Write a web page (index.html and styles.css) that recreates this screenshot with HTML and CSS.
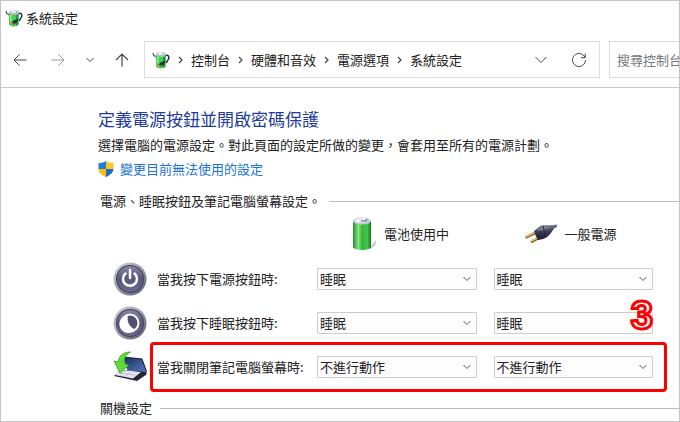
FILE: index.html
```html
<!DOCTYPE html>
<html lang="zh-Hant">
<head>
    <meta charset="UTF-8">
    <meta name="viewport" content="width=device-width, initial-scale=1.0">
    <title>系統設定</title>
    <link rel="stylesheet" href="styles.css">
</head>
<body>
    <!-- Shared icons -->
    <svg class="icon-defs" aria-hidden="true">
        <defs>
            <linearGradient id="greenMetal" x1="0" x2="1" y1="0" y2="0">
                <stop offset="0" stop-color="#1f8f2b"/>
                <stop offset="0.3" stop-color="#86e684"/>
                <stop offset="0.5" stop-color="#35b53c"/>
                <stop offset="0.8" stop-color="#45c44a"/>
                <stop offset="1" stop-color="#14701d"/>
            </linearGradient>
            <linearGradient id="ring" x1="0" x2="1" y1="0" y2="1">
                <stop offset="0" stop-color="#d4d5dc"/>
                <stop offset="0.5" stop-color="#9a9ba8"/>
                <stop offset="1" stop-color="#55566a"/>
            </linearGradient>
            <linearGradient id="disc" x1="0" x2="0" y1="0" y2="1">
                <stop offset="0" stop-color="#8687a3"/>
                <stop offset="0.5" stop-color="#56577a"/>
                <stop offset="1" stop-color="#6a6b8c"/>
            </linearGradient>
            <linearGradient id="plugBody" x1="0" x2="0" y1="0" y2="1">
                <stop offset="0" stop-color="#7c8098"/>
                <stop offset="0.45" stop-color="#3b3e55"/>
                <stop offset="1" stop-color="#181a2c"/>
            </linearGradient>
            <linearGradient id="screen" x1="0" x2="1" y1="0" y2="1">
                <stop offset="0" stop-color="#1d2b5c"/>
                <stop offset="1" stop-color="#5577bd"/>
            </linearGradient>
        </defs>
        <symbol id="power" viewBox="0 0 18 18">
            <path d="M12.500 5c3.500-2 5 .5 4 3-.6 1.500-1.800 2-2 4" fill="none" stroke="#22244a" stroke-width="1.400"/>
            <path d="M1 2l.7 2.500L4 5.500 5 8" fill="none" stroke="#5b5e70" stroke-width="1.300"/>
            <path d="M4 4h9.500v11.500c-2 2.500-7.500 2.500-9.500 0z" fill="#3ed44a"/>
            <path d="M11 4h2.500v11.500L11 17z" fill="#1f9a35"/>
            <path d="M5 6h1.500v7H5z" fill="#93f090"/>
            <ellipse cx="9" cy="3.500" rx="5" ry="2.500" fill="#b4bccb"/>
            <ellipse cx="8.500" cy="2.500" rx="2.800" ry="1.500" fill="#e8ecf3"/>
            <path d="M6.500 14l2-2.500 5-2-1.500 4-3.500 2z" fill="#292c42"/>
            <path d="M4.500 14l2.500-2M6 16l2.500-2" stroke="#d88b48" stroke-width="1.200"/>
        </symbol>
        <symbol id="chevronDown" viewBox="0 0 8 6">
            <path d="M0.500 1L4 4.500 7.500 1" fill="none" stroke="currentColor"/>
        </symbol>
        <symbol id="chevronRight" viewBox="0 0 5 8">
            <path d="M1 1l3 3-3 3" fill="none" stroke="currentColor" stroke-width="1.200"/>
        </symbol>
    </svg>

    <div class="window">
        <!-- Title bar -->
        <header class="title-bar">
            <svg class="app-icon"><use href="#power"/></svg>
            <span>系統設定</span>
        </header>

        <!-- Toolbar -->
        <div class="toolbar">
            <div class="nav-buttons">
                <button type="button" aria-label="上一頁">
                    <svg width="14" height="14" viewBox="0 0 14 14"><path d="M13.500 7H1M6.500 1.500L1 7l5.500 5.500" fill="none" stroke="#444"/></svg>
                </button>
                <button type="button" aria-label="下一頁">
                    <svg width="14" height="14" viewBox="0 0 14 14"><path d="M0.500 7H13M7.500 1.500L13 7l-5.500 5.500" fill="none" stroke="#999"/></svg>
                </button>
                <button type="button" class="recent" aria-label="最近的位置">
                    <svg width="8" height="6"><use href="#chevronDown"/></svg>
                </button>
                <button type="button" aria-label="上一層">
                    <svg width="14" height="14" viewBox="0 0 14 14"><path d="M7 13.500V1M1 7l6-6 6 6" fill="none" stroke="#444" stroke-width="1.200"/></svg>
                </button>
            </div>
            <nav class="address">
                <svg class="app-icon"><use href="#power"/></svg>
                <svg class="sep"><use href="#chevronRight"/></svg>
                <a href="#">控制台</a>
                <svg class="sep"><use href="#chevronRight"/></svg>
                <a href="#">硬體和音效</a>
                <svg class="sep"><use href="#chevronRight"/></svg>
                <a href="#">電源選項</a>
                <svg class="sep"><use href="#chevronRight"/></svg>
                <a href="#">系統設定</a>
                <div class="address-actions">
                    <button type="button" aria-label="先前的位置">
                        <svg width="12" height="8" viewBox="0 0 12 8"><path d="M0.500 1L6 6.500 11.500 1" fill="none" stroke="#444"/></svg>
                    </button>
                    <button type="button" aria-label="重新整理">
                        <svg width="16" height="16" viewBox="0 0 16 16"><path d="M14 5.500A6.500 6.500 0 1 0 14.500 8M14.200 1.500v4.200H10" fill="none" stroke="#444"/></svg>
                    </button>
                </div>
            </nav>
            <input class="search" type="text" placeholder="搜尋控制台" aria-label="搜尋控制台">
        </div>

        <!-- Settings -->
        <main>
            <h1>定義電源按鈕並開啟密碼保護</h1>
            <p>選擇電腦的電源設定。對此頁面的設定所做的變更，會套用至所有的電源計劃。</p>
            <a class="admin-link" href="#">
                <svg width="16" height="18" viewBox="0 0 16 18">
                    <path d="M8 1C6 2.500 3.500 3 0.500 3v6H8z" fill="#1f7fd6"/>
                    <path d="M8 1c2 1.500 4.500 2 7.500 2v6H8z" fill="#fcc721"/>
                    <path d="M0.500 9c.3 4 4 6.500 7.500 8V9z" fill="#fbbc16"/>
                    <path d="M15.500 9c-.3 4-4 6.500-7.500 8V9z" fill="#1b6fc4"/>
                </svg>
                <span>變更目前無法使用的設定</span>
            </a>

            <h2>電源、睡眠按鈕及筆記電腦螢幕設定。</h2>

            <div class="setting-row sources">
                <div class="source battery">
                    <svg width="28" height="36" viewBox="0 0 28 36">
                        <path d="M20 32l7-8c1 3-1 8-7 9z" fill="#bbb" opacity="0.7"/>
                        <path d="M4 5v26c1 4 17 4 18 0V5z" fill="url(#greenMetal)"/>
                        <ellipse cx="13" cy="5" rx="9" ry="3.500" fill="#c9cddb"/>
                        <path d="M6 5c1-2 5-3 8-2.500L12 6c-2 .6-5 .4-6-1z" fill="#f6f7fc"/>
                        <ellipse cx="15" cy="4" rx="3.500" ry="1.600" fill="#8c90a8"/>
                        <ellipse cx="14" cy="3" rx="3" ry="1.300" fill="#eceef5"/>
                    </svg>
                    <span>電池使用中</span>
                </div>
                <div class="source">
                    <svg width="34" height="22" viewBox="0 0 34 22">
                        <path d="M1.500 14.500L13 9M7 19l11-6" stroke="#8b5c25" stroke-width="3"/>
                        <path d="M1.500 13.800L13 8.500M7 18.200l11-5.500" stroke="#f2cf8e" stroke-width="1.300"/>
                        <path d="M10 8l7-5.500C22 2 26 2.500 29.500 2L33 1.500v2.500l-3 1.500c-3 5-6 9-11 10.500L14 17c-1-2-3-5-4-9z" fill="url(#plugBody)"/>
                        <path d="M12 7.500L18 3.500l9 .5-8 3.500z" fill="#9296ad" opacity="0.6"/>
                        <path d="M19 3c1 4 2 8 1.500 12" fill="none" stroke="#23253a"/>
                    </svg>
                    <span>一般電源</span>
                </div>
            </div>

            <div class="setting-row">
                <svg class="row-icon" viewBox="0 0 34 34">
                    <circle cx="17" cy="17" r="16.500" fill="url(#ring)"/>
                    <circle cx="17" cy="17" r="14" fill="#3f405c"/>
                    <circle cx="17" cy="17" r="13" fill="url(#disc)"/>
                    <path d="M12.500 11.500a7 7 0 1 0 9 0" fill="none" stroke="#fff" stroke-width="2.500" stroke-linecap="round"/>
                    <path d="M17 8v8" stroke="#fff" stroke-width="2.500" stroke-linecap="round"/>
                </svg>
                <span id="powerLabel">當我按下電源按鈕時:</span>
                <div class="picker">
                    <select aria-labelledby="powerLabel"><option>睡眠</option><option>不進行動作</option></select>
                    <svg><use href="#chevronDown"/></svg>
                </div>
                <div class="picker">
                    <select aria-labelledby="powerLabel"><option>睡眠</option><option>不進行動作</option></select>
                    <svg><use href="#chevronDown"/></svg>
                </div>
            </div>

            <div class="setting-row">
                <svg class="row-icon" viewBox="0 0 34 34">
                    <circle cx="17" cy="17" r="16.500" fill="url(#ring)"/>
                    <circle cx="17" cy="17" r="14" fill="#3f405c"/>
                    <circle cx="17" cy="17" r="13" fill="url(#disc)"/>
                    <circle cx="17" cy="17" r="8.500" fill="#4f5072" stroke="#fff" stroke-width="2"/>
                    <path d="M15 9c-1.500 7 1.500 12 7.500 14.500A9 9 0 1 1 15 9z" fill="#fff"/>
                </svg>
                <span id="sleepLabel">當我按下睡眠按鈕時:</span>
                <div class="picker">
                    <select aria-labelledby="sleepLabel"><option>睡眠</option><option>不進行動作</option></select>
                    <svg><use href="#chevronDown"/></svg>
                </div>
                <div class="picker">
                    <select aria-labelledby="sleepLabel"><option>睡眠</option><option>不進行動作</option></select>
                </div>
            </div>

            <div class="setting-row highlighted">
                <svg class="row-icon" viewBox="0 0 34 34">
                    <path d="M10 7l19 2 4.500 12.500-19-1z" fill="url(#screen)"/>
                    <path d="M10 7l19 2 4.500 12.500" fill="none" stroke="#10162e"/>
                    <path d="M8 20l25.500 1.500v3L24 31 1 26z" fill="#23263a"/>
                    <path d="M8 20l20 2-8 6.500L2 25z" fill="#e4e7ed"/>
                    <path d="M6 23l16 2M12 21l-5 5M17 22l-5 5" stroke="#a5a9b6" stroke-width="0.600"/>
                    <path d="M17.500 2C10 2 6 6 5 12L1 11l6 12 9-8-5-1C11 8 13 4 17.500 2z" fill="#5fdc35" stroke="#2d9c17" stroke-width="0.800"/>
                </svg>
                <span id="lidLabel">當我關閉筆記電腦螢幕時:</span>
                <div class="picker">
                    <select aria-labelledby="lidLabel"><option>不進行動作</option><option>睡眠</option></select>
                    <svg><use href="#chevronDown"/></svg>
                </div>
                <div class="picker">
                    <select aria-labelledby="lidLabel"><option>不進行動作</option><option>睡眠</option></select>
                    <svg><use href="#chevronDown"/></svg>
                </div>
                <span class="step">3</span>
            </div>

            <h2>關機設定</h2>
        </main>
    </div>
</body>
</html>
```
FILE: styles.css
```css
/* General Styles */
* {
    box-sizing: border-box;
}

body {
    margin: 0;
    font-family: "Noto Sans CJK TC", sans-serif;
    font-size: 13px;
    line-height: 20px;
    color: #222;
    background-color: #fff;
}

svg {
    display: block;
    flex: none;
}

a {
    color: inherit;
    text-decoration: none;
}

button {
    display: flex;
    align-items: center;
    justify-content: center;
    padding: 0;
    border: none;
    background: none;
    color: #444;
    cursor: pointer;
}

.icon-defs {
    position: absolute;
    width: 0;
    height: 0;
}

.window {
    min-height: 100vh;
    border: 1px solid #c4c4c4;
    overflow: hidden;
}

.app-icon {
    width: 18px;
    height: 18px;
}

/* Title bar */
.title-bar {
    display: flex;
    align-items: center;
    gap: 3px;
    padding: 7px 4px 13px;
}

/* Toolbar */
.toolbar {
    display: flex;
    gap: 9px;
    padding-bottom: 9px;
    border-bottom: 1px solid #c8c8c8;
}

.nav-buttons {
    display: flex;
    align-items: center;
    gap: 24px;
    padding: 0 6px 0 12px;
}

.nav-buttons .recent {
    width: 8px;
    margin: 0 -3px;
}

.address {
    display: flex;
    flex: 1;
    align-items: center;
    gap: 8px;
    height: 37px;
    padding: 0 12px 0 7px;
    border: 1px solid #ddd;
    white-space: nowrap;
}

.sep {
    width: 5px;
    height: 8px;
    color: #444;
}

.address-actions {
    display: flex;
    gap: 24px;
    margin-left: auto;
}

.search {
    width: 80px;
    margin-right: -10px;
    padding: 0 7px;
    border: 1px solid #ddd;
    font: inherit;
}

.search::placeholder {
    color: #777;
}

/* Settings */
main {
    padding: 19px 0 2px 97px;
}

h1 {
    margin: 0 0 4px;
    font-size: 17px;
    font-weight: 400;
    line-height: 24px;
    color: #1e3c9c;
}

p {
    margin: 0 0 4px;
}

.admin-link {
    display: flex;
    align-items: center;
    gap: 6px;
    width: fit-content;
    color: #1a74d8;
}

h2 {
    display: flex;
    align-items: center;
    gap: 8px;
    margin: 12px 0 0 2px;
    font-size: 13px;
    font-weight: 400;
    line-height: 20px;
}

h2::after {
    content: "";
    flex: 1;
    height: 1px;
    background-color: #bbb;
}

/* The row icon is wider than its column and runs into the gap */
.setting-row {
    position: relative;
    display: grid;
    grid-template-columns: 27px 143px 1fr 1fr;
    align-items: center;
    height: 44px;
    margin: 0 26px 0 15px;
    column-gap: 17px;
    white-space: nowrap;
}

.row-icon {
    width: 34px;
    height: 34px;
}

.sources {
    height: 46px;
}

.source {
    display: flex;
    align-items: center;
    gap: 7px;
    padding-left: 30px;
}

.source.battery {
    grid-column: 3;
    padding-left: 32px;
}

.picker {
    position: relative;
}

.picker select {
    display: block;
    width: 100%;
    height: 22px;
    padding: 0 20px 0 2px;
    border: 1px solid #ccc;
    border-radius: 1px;
    background-color: #fdfdfd;
    font: inherit;
    line-height: 20px;
    color: #222;
    appearance: none;
}

.picker svg {
    position: absolute;
    top: 8px;
    right: 6px;
    width: 8px;
    height: 6px;
    color: #555;
    pointer-events: none;
}

/* Marked step */
.highlighted::after {
    content: "";
    position: absolute;
    top: -3px;
    right: -14px;
    bottom: -3px;
    left: 37px;
    border: 3px solid #f00;
    border-radius: 4px;
    pointer-events: none;
}

.step {
    position: absolute;
    top: -50px;
    right: 0;
    font-family: "Liberation Sans", sans-serif;
    font-size: 40px;
    font-weight: bold;
    line-height: 40px;
    color: #fff;
    -webkit-text-stroke: 3px #f00;
}

.highlighted + h2 {
    margin-top: 9px;
}
```
